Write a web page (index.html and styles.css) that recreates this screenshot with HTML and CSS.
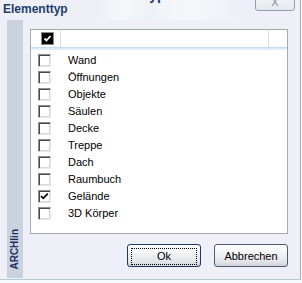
FILE: index.html
```html
<!DOCTYPE html>
<html lang="de">
<head>
    <meta charset="UTF-8">
    <title>Elementtyp</title>
    <link rel="stylesheet" href="styles.css">
</head>
<body>

<div class="dialog">
    <div class="banner">
        <div class="banner-text">
            <div class="banner-title">Auswahl der Elementtypen</div>
            <div class="caption">Elementtyp</div>
        </div>
        <button class="close-btn">X</button>
    </div>

    <div class="content">
        <div class="sidebar"><span>ARCHIin</span></div>

        <div class="main">
            <div class="listbox">
                <div class="list-header">
                    <div class="col col-check"><span class="head-box"><svg width="9" height="9" viewBox="0 0 9 9"><polyline points="1.5,4.5 3.5,6.5 7.5,2" fill="none" stroke="#fff" stroke-width="1.8"/></svg></span></div>
                    <div class="col col-name"></div>
                    <div class="col col-rest"></div>
                </div>
                <ul class="rows">
                    <li><span class="box"></span>Wand</li>
                    <li><span class="box"></span>Öffnungen</li>
                    <li><span class="box"></span>Objekte</li>
                    <li><span class="box"></span>Säulen</li>
                    <li><span class="box"></span>Decke</li>
                    <li><span class="box"></span>Treppe</li>
                    <li><span class="box"></span>Dach</li>
                    <li><span class="box"></span>Raumbuch</li>
                    <li><span class="box checked"><svg width="9" height="9" viewBox="0 0 9 9"><polyline points="1,4 3.2,6.3 7.8,1.6" fill="none" stroke="#000" stroke-width="1.7"/></svg></span>Gelände</li>
                    <li><span class="box"></span>3D Körper</li>
                </ul>
            </div>

            <div class="buttons">
                <button class="btn btn-default"><span>Ok</span></button>
                <button class="btn">Abbrechen</button>
            </div>
        </div>
    </div>
</div>

</body>
</html>
```

FILE: styles.css
```css
body {
    margin: 0;
    background-color: #f7f8fb;
    font-family: "Liberation Sans", Arial, sans-serif;
    font-size: 11px;
    color: #000;
}
.dialog {
    width: 300px;
    height: 279px;
    background-color: #eff0f7;
    border-right: 1px solid #a9adb8;
    border-bottom: 1px solid #b5cbd6;
    overflow: hidden;
}
.banner {
    height: 20px;
    display: flex;
    justify-content: space-between;
    align-items: flex-start;
    overflow: hidden;
    background: linear-gradient(to right, #eff0f7 0px, #eff0f7 100px, #f5f8fa 120px, #eef2f6 150px, #f6f8fb 190px, #eff0f7 240px);
}
.banner-text {
    padding-left: 3px;
}
.banner-title {
    font-weight: bold;
    font-size: 14px;
    line-height: 14px;
    height: 14px;
    color: #1f3a6a;
    margin-top: -12px;
    white-space: nowrap;
}
.caption {
    font-weight: bold;
    font-size: 12px;
    line-height: 14px;
    color: #213d6b;
    margin-top: 0;
}
.close-btn {
    width: 40px;
    height: 17px;
    margin: -6px 5px 0 0;
    padding: 0;
    border: 1px solid #9aa0ab;
    border-radius: 0 0 3px 3px;
    background: linear-gradient(to bottom, #f7f8fa, #e3e6ec);
    font-family: "Liberation Sans", Arial, sans-serif;
    font-size: 11px;
    line-height: 15px;
    color: #8a8f99;
}
.content {
    height: 258px;
    display: flex;
}
.sidebar {
    width: 16px;
    margin-left: 7px;
    background-color: #cbd2df;
    display: flex;
    flex-direction: column;
    justify-content: flex-end;
    align-items: center;
}
.sidebar span {
    writing-mode: vertical-rl;
    transform: rotate(180deg);
    font-weight: bold;
    font-size: 10px;
    line-height: 14px;
    color: #1c3062;
    padding-top: 8px;
    padding-left: 1px;
}
.main {
    margin-left: 7px;
}
.listbox {
    margin-top: 9px;
    width: 256px;
    height: 203px;
    background-color: #fff;
    border: 1px solid #a3a9b2;
}
.list-header {
    display: flex;
    height: 20px;
    background: linear-gradient(to bottom, #fff 17px, #b9d6ee 17px, #cfe3f4 18px, #e4eff9 19px, #e4eff9 20px);
}
.col {
    border-right: 1px solid #dcdfe3;
}
.col-check {
    width: 30px;
    padding: 3px 0 0 11px;
    box-sizing: border-box;
}
.col-name {
    width: 207px;
}
.col-rest {
    flex: 1;
    border-right: none;
}
.head-box {
    display: flex;
    align-items: center;
    justify-content: center;
    width: 11px;
    height: 11px;
    background-color: #000;
    box-shadow: 0 0 0 1px #8a8a8a;
}
.rows {
    list-style-type: none;
    margin: 0;
    padding: 2px 0 0 7px;
}
.rows li {
    height: 17px;
    line-height: 17px;
    display: flex;
    align-items: center;
    gap: 17px;
}
.box {
    width: 11px;
    height: 11px;
    border: 1px solid;
    border-color: #8e8e8e #e8e8e8 #e8e8e8 #8e8e8e;
    box-shadow: inset 1px 1px 0 #4a4a4a, inset -1px -1px 0 #d8d8d8;
    background-color: #fff;
    display: flex;
    align-items: center;
    justify-content: center;
}
.buttons {
    margin-top: 10px;
    display: flex;
    justify-content: flex-end;
    gap: 13px;
}
.btn {
    width: 74px;
    height: 23px;
    padding: 0;
    border: 1px solid #4f5a6c;
    border-radius: 3px;
    background: linear-gradient(to bottom, #ffffff 0%, #f2f3f5 40%, #e2e4e9 80%, #cfd2d9 100%);
    font-family: "Liberation Sans", Arial, sans-serif;
    font-size: 11px;
    color: #000;
}
.btn-default {
    border-color: #1d3766;
    padding: 3px;
}
.btn-default span {
    display: block;
    height: 15px;
    line-height: 15px;
    border: 1px dotted #000;
}
```
